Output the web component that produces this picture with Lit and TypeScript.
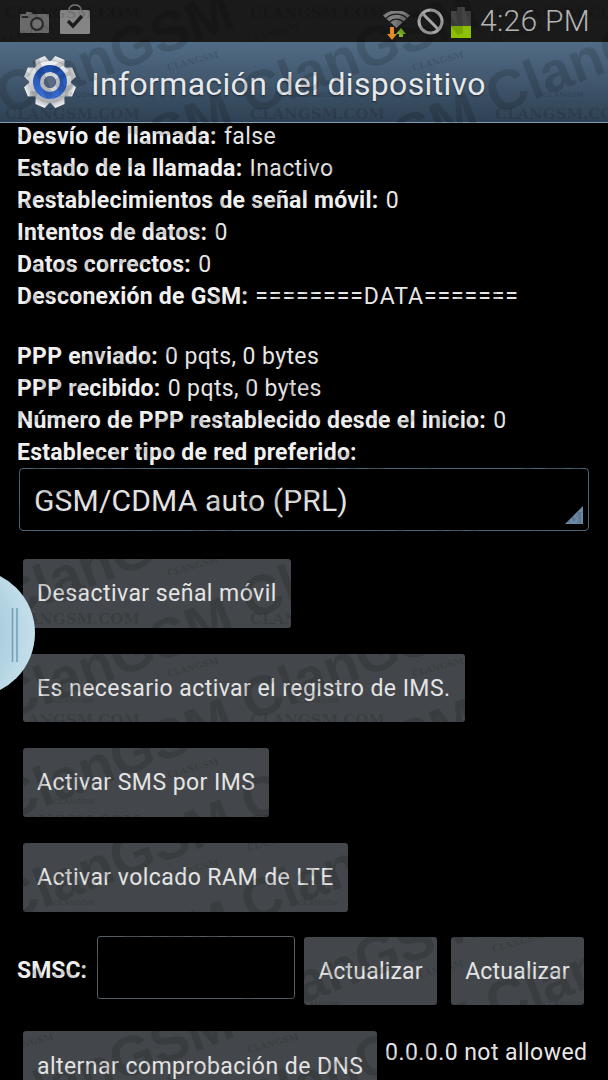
import { LitElement, html, css, svg } from "lit";
import { customElement } from "lit/decorators.js";

const rows1: [string, string][] = [
  ["Desvío de llamada:", "false"],
  ["Estado de la llamada:", "Inactivo"],
  ["Restablecimientos de señal móvil:", "0"],
  ["Intentos de datos:", "0"],
  ["Datos correctos:", "0"],
  ["Desconexión de GSM:", "========DATA======="],
];
const rows2: [string, string][] = [
  ["PPP enviado:", "0 pqts, 0 bytes"],
  ["PPP recibido:", "0 pqts, 0 bytes"],
  ["Número de PPP restablecido desde el inicio:", "0"],
  ["Establecer tipo de red preferido:", ""],
];

const range = (n: number) => Array.from({ length: n }, (_, i) => i);

@customElement("app-root")
export class AppRoot extends LitElement {
  static styles = css`
    :host {
      display: block;
      position: relative;
      width: 608px;
      height: 1080px;
      overflow: hidden;
      background: #000;
      color: #eee;
      font-family: Roboto, "Liberation Sans", sans-serif;
    }
    .status {
      height: 42px;
      background: #1a1a1a;
      display: flex;
      align-items: center;
      padding: 0 18px 0 20px;
      box-sizing: border-box;
    }
    .status svg { display: block; flex: none; }
    .cam { margin-right: 11px; margin-top: 2px; }
    .bag { margin-top: -4px; }
    .spacer { flex: 1; }
    .wifi { margin-right: 7px; margin-top: 8px; }
    .nosign { margin-right: 7px; margin-top: 1px; }
    .batt { margin-right: 9px; margin-top: 3px; }
    .time { font-size: 30px; font-weight: 300; color: #b5b5b5; line-height: 42px; letter-spacing: 0.3px; }
    .bar {
      height: 81px;
      box-sizing: border-box;
      background: linear-gradient(#516c85, #2f4154);
      border-bottom: 1px solid #7f9db5;
      display: flex;
      align-items: center;
      padding-left: 23px;
      gap: 14px;
    }
    .title {
      font-size: 32px;
      color: #e6e8ea;
      text-shadow: 0 1px 2px rgba(0, 0, 0, 0.55);
      letter-spacing: 0.33px;
      padding-top: 4px;
    }
    .rows { padding: 0 0 0 17px; margin-top: -2px; }
    .row { height: 32px; line-height: 32px; font-size: 23px; letter-spacing: 0.4px; white-space: nowrap; color: #e6e6e6; }
    .row b { font-weight: 700; color: #f0f0f0; letter-spacing: 0.25px; }
    .row span { margin-left: 1px; }
    .eq { letter-spacing: 0.95px; }
    .gap { height: 28px; }
    .spinner {
      margin: -1px 19px 0 19px;
      height: 63px;
      box-sizing: border-box;
      border: 1px solid #4a6478;
      border-radius: 4px;
      position: relative;
      display: flex;
      align-items: center;
      padding: 2px 0 0 14px;
      font-size: 30px;
      letter-spacing: 0.17px;
      color: #e2e2e2;
    }
    .arrow { position: absolute; right: 5px; bottom: 6px; }
    .btns { display: flex; flex-direction: column; gap: 26px; padding: 28px 0 0 23px; align-items: flex-start; }
    .btn {
      height: 68.7px;
      box-sizing: border-box;
      background: #43474b;
      border-radius: 3px;
      display: flex;
      align-items: center;
      padding: 0 14px;
      font-size: 23px;
      color: #e4e4e4;
      white-space: nowrap;
      letter-spacing: 0.45px;
    }
    .smsc { display: flex; align-items: flex-start; padding: 24px 0 0 17px; }
    .smsc-l { font-size: 23px; font-weight: 700; margin-top: 21px; width: 80px; color: #eee; }
    .input { width: 198px; height: 63px; box-sizing: border-box; border: 1px solid #565e64; border-radius: 3px; margin-right: 9px; }
    .upd { width: 133px; justify-content: center; padding: 0; margin-top: 1px; letter-spacing: 0.2px; }
    .upd + .upd { margin-left: 14px; }
    .last { display: flex; align-items: flex-start; padding: 26px 0 0 23px; }
    .dns { width: 354px; padding-top: 22px; align-items: flex-start; }
    .na { font-size: 23px; margin: 8px 0 0 8px; color: #e6e6e6; letter-spacing: 0.45px; white-space: nowrap; }
    .mark { position: absolute; inset: 0; pointer-events: none; }
    .mark text { fill: rgba(0, 0, 0, 0.14); }
    .t1 { font: 900 15px "DejaVu Serif", serif; }
    .t2 { font: 900 9px "DejaVu Serif", serif; }
    .t3 { font: 700 56px "Liberation Sans", sans-serif; }
    .t4 { font: 700 8px "Liberation Sans", sans-serif; }
    .handle { position: absolute; left: -30px; top: 569px; width: 65px; height: 128px; }
  `;

  private marks() {
    return range(11).map((r) =>
      range(4).map((c) => {
        const x = c * 245;
        const y = r * 101 - 25;
        return svg`
          <text class="t3" transform="translate(${x + 5} ${y + 140}) rotate(-21)">ClanGSM</text>
          <text class="t1" x=${x + 5} y=${y + 43}>CLANGSM.COM</text>
          <text class="t2" transform="translate(${x + 168} ${y + 96}) rotate(-15)">CLANGSM</text>
          <text class="t2" transform="translate(${x + 3} ${y + 68}) rotate(-15)">CLANGSM</text>
          <text class="t4" x=${x + 53} y=${y + 122}>CLANGSM</text>
        `;
      })
    );
  }

  private row([a, b]: [string, string]) {
    const eq = b.startsWith("=");
    return html`<div class="row"><b>${a}</b>${b ? html` <span class=${eq ? "eq" : ""}>${b}</span>` : ""}</div>`;
  }

  render() {
    return html`
      <div class="status">
        <svg class="cam" width="29" height="21" viewBox="0 0 29 21">
          <path fill="#6a6a6a" d="M1 2h5V0h5l2 2h15a1 1 0 0 1 1 1v17a1 1 0 0 1-1 1H1a1 1 0 0 1-1-1V3a1 1 0 0 1 1-1z" />
          <rect x="2" y="4" width="6" height="2" fill="#2a2a2a" />
          <circle cx="17" cy="12" r="7" fill="#2a2a2a" />
          <circle cx="17" cy="12" r="4.800" fill="#707070" />
        </svg>
        <svg class="bag" width="30" height="30" viewBox="0 0 30 30">
          <path fill="none" stroke="#777" stroke-width="1.600" d="M9 8V5.500a6 4.500 0 0 1 12 0V8" />
          <rect x="0" y="6" width="30" height="24" rx="1.500" fill="#858585" />
          <path fill="none" stroke="#1c1c1c" stroke-width="3.400" d="M8 17l5 5 9-10" />
        </svg>
        <div class="spacer"></div>
        <svg class="wifi" width="27" height="29" viewBox="0 0 27 29">
          <path fill="#7d7d7d" d="M13.500 17L0 4.500a20 20 0 0 1 27 0z" />
          <path fill="none" stroke="#1a1a1a" stroke-width="1.300" d="M3 7.500a15 15 0 0 1 21 0M6.500 11a10 10 0 0 1 14 0" />
          <path fill="#e58a24" d="M7 16h4v7h3l-5 6-5-6h3z" />
          <path fill="#7fb52a" d="M18 17l5 6h-3v3h-4v-3h-3z" />
        </svg>
        <svg class="nosign" width="27" height="27" viewBox="0 0 27 27">
          <circle cx="13.500" cy="13.500" r="11.500" fill="none" stroke="#a8a8a8" stroke-width="3" />
          <path d="M5.500 5.500l16 16" stroke="#a8a8a8" stroke-width="3" />
        </svg>
        <svg class="batt" width="20" height="31" viewBox="0 0 20 31">
          <path fill="#444" d="M6 0h8v4h6v16H0V4h6z" />
          <rect y="19" width="20" height="12" fill="#8dc100" />
        </svg>
        <div class="time">4:26 PM</div>
      </div>
      <div class="bar">
        <svg width="54" height="54" viewBox="-27 -27 54 54">
          <defs>
            <linearGradient id="g" x1="0" y1="0" x2="0" y2="1"><stop offset="0" stop-color="#f2f2f2" /><stop offset="1" stop-color="#a9adb2" /></linearGradient>
            <linearGradient id="b" x1="0" y1="0" x2="0" y2="1"><stop offset="0" stop-color="#1c4aa6" /><stop offset="1" stop-color="#3b72d6" /></linearGradient>
          </defs>
          ${range(8).map((i) => svg`<path fill="url(#g)" transform="rotate(${i * 45 + 22.5})" d="M-5-26h10l3 8h-16z" />`)}
          <circle r="21" fill="url(#g)" />
          <circle r="17" fill="url(#b)" />
          <circle r="8" fill="none" stroke="#d4d6da" stroke-width="4" />
          <circle r="6" fill="#5a6c85" />
        </svg>
        <div class="title">Información del dispositivo</div>
      </div>
      <div class="rows">
        ${rows1.map((r) => this.row(r))}
        <div class="gap"></div>
        ${rows2.map((r) => this.row(r))}
      </div>
      <div class="spinner">
        GSM/CDMA auto (PRL)
        <svg class="arrow" width="18" height="18" viewBox="0 0 18 18"><path fill="#6a8aa5" d="M18 0v18H0z" /></svg>
      </div>
      <div class="btns">
        <div class="btn">Desactivar señal móvil</div>
        <div class="btn">Es necesario activar el registro de IMS.</div>
        <div class="btn">Activar SMS por IMS</div>
        <div class="btn">Activar volcado RAM de LTE</div>
      </div>
      <div class="smsc">
        <div class="smsc-l">SMSC:</div>
        <div class="input"></div>
        <div class="btn upd">Actualizar</div>
        <div class="btn upd">Actualizar</div>
      </div>
      <div class="last">
        <div class="btn dns">alternar comprobación de DNS</div>
        <div class="na">0.0.0.0 not allowed</div>
      </div>
      <svg class="mark" width="608" height="1080" viewBox="0 0 608 1080" aria-hidden="true">${this.marks()}</svg>
      <svg class="handle" viewBox="0 0 65 128">
        <defs>
          <radialGradient id="h" cx="0.25" cy="0.5" r="0.85"><stop offset="0" stop-color="#7fb0c8" /><stop offset="1" stop-color="#cfe6f0" /></radialGradient>
        </defs>
        <circle cx="1" cy="64" r="64" fill="url(#h)" />
        <path d="M42.500 39v54M47 39v54" stroke="#6f9fb5" stroke-width="1.500" fill="none" />
      </svg>
    `;
  }
}
